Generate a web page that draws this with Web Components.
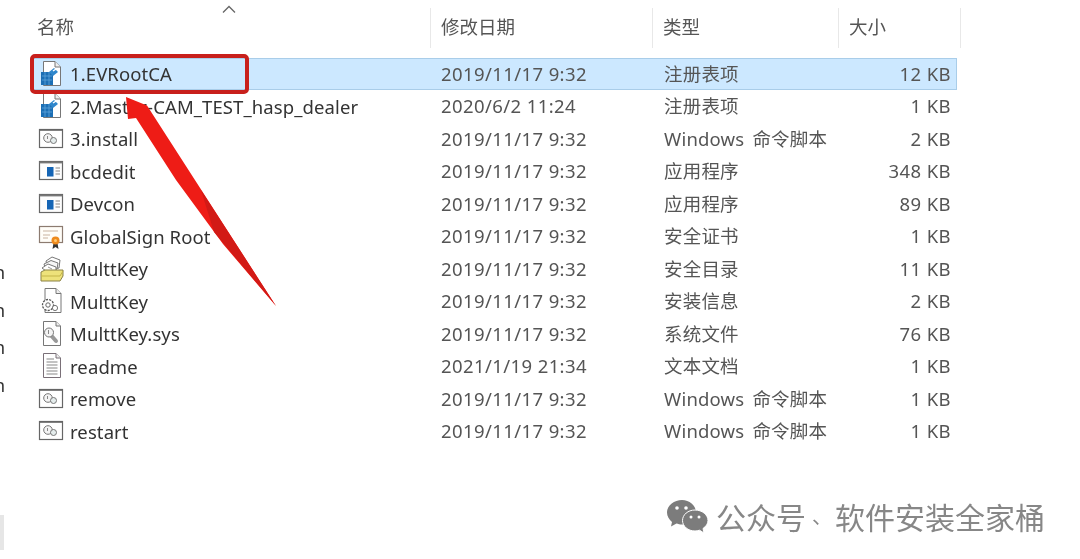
<!DOCTYPE html>
<html>
<head>
<meta charset="utf-8">
<style>
html, body { margin: 0; background: #fff; }
body { width: 1080px; height: 559px; overflow: hidden; font-family: "Noto Sans", "Noto Sans CJK SC", sans-serif; }
</style>
</head>
<body>
<explorer-view>
  <list-header></list-header>
  <file-row icon="reg" date="2019/11/17 9:32" kind="注册表项" size="12 KB" selected>1.EVRootCA</file-row>
  <file-row icon="reg" date="2020/6/2 11:24" kind="注册表项" size="1 KB">2.Master-CAM_TEST_hasp_dealer</file-row>
  <file-row icon="script" date="2019/11/17 9:32" kind="Windows 命令脚本" size="2 KB">3.install</file-row>
  <file-row icon="app" date="2019/11/17 9:32" kind="应用程序" size="348 KB">bcdedit</file-row>
  <file-row icon="app" date="2019/11/17 9:32" kind="应用程序" size="89 KB">Devcon</file-row>
  <file-row icon="cert" date="2019/11/17 9:32" kind="安全证书" size="1 KB">GlobalSign Root</file-row>
  <file-row icon="cat" date="2019/11/17 9:32" kind="安全目录" size="11 KB">MulttKey</file-row>
  <file-row icon="inf" date="2019/11/17 9:32" kind="安装信息" size="2 KB">MulttKey</file-row>
  <file-row icon="sys" date="2019/11/17 9:32" kind="系统文件" size="76 KB">MulttKey.sys</file-row>
  <file-row icon="txt" date="2021/1/19 21:34" kind="文本文档" size="1 KB">readme</file-row>
  <file-row icon="script" date="2019/11/17 9:32" kind="Windows 命令脚本" size="1 KB">remove</file-row>
  <file-row icon="script" date="2019/11/17 9:32" kind="Windows 命令脚本" size="1 KB">restart</file-row>
  <red-callout></red-callout>
  <edge-scraps></edge-scraps>
  <wechat-mark></wechat-mark>
</explorer-view>

<script>
const icons = {
  reg: `<path d="M5.5 .5H17L22.5 6V24.5H5.5z" fill="#fff" stroke="#777"/><path d="M17 .5V6H22.5" fill="#eee" stroke="#777"/>
    <rect x="3" y="11" width="12" height="13" fill="#1c6fb5"/><path d="M4 15H14M4 19H14M7 11V24M11 11V24" stroke="#5fa5dc" stroke-width=".8"/>
    <path d="M11 11L16 7L20 11L15 15z" fill="#2f87cc"/><path d="M15 10L18 8" stroke="#fff" stroke-width="1.5"/>`,
  script: `<rect x="1.5" y="3.5" width="23" height="18" fill="#fff" stroke="#666" stroke-width="1.2"/><path d="M1.5 4H24.5" stroke="#666" stroke-width="1.6"/>
    <circle cx="10" cy="12" r="4.3" fill="#f4f4f4" stroke="#777"/><circle cx="15.5" cy="14.5" r="3" fill="#e4ecec" stroke="#777"/><path d="M9.5 10V13" stroke="#888"/>`,
  app: `<rect x="1.5" y="3.5" width="23" height="18" fill="#fdfdfd" stroke="#666" stroke-width="1.2"/><path d="M1.5 4.5H24.5" stroke="#777" stroke-width="1.8"/>
    <rect x="9" y="9" width="6.5" height="9.5" fill="#1565b5"/><path d="M17.5 10H22M17.5 13H22M17.5 16H22" stroke="#888" stroke-width="1.1"/>`,
  cert: `<rect x="1.5" y="3.5" width="23" height="16" fill="#fffdf8" stroke="#8c7b70" stroke-width="1.2"/><path d="M5 8H20M5 12H12M5 15H10" stroke="#c9b3a0"/>
    <path d="M15.5 20L14.5 26L17.5 24L20.5 26L19.5 20z" fill="#333"/><circle cx="17.5" cy="17.5" r="4" fill="#ee8a1e"/><circle cx="17.5" cy="17.5" r="1.5" fill="#ffc96e"/>`,
  cat: `<path d="M8 5L14 1L22 4L21 12L10 14z" fill="#fff" stroke="#777"/><path d="M6 8L13 4.5L20 7L19 13L8 15z" fill="#f6f6f6" stroke="#777"/>
    <path d="M4 12L10 8L18 11V15H8z" fill="#fff" stroke="#777"/><path d="M10 11L14 13" stroke="#999"/>
    <path d="M3 16L7 14H25V20L22 25H3z" fill="#eee27a" stroke="#8a8146"/><path d="M3.5 20H22L25 15" fill="none" stroke="#c4b548"/>`,
  inf: `<path d="M7 .5H18L23 5.5V24.5H7z" fill="#fff" stroke="#777"/><path d="M18 .5V5.5H23" fill="#eee" stroke="#777"/>
    <circle cx="10" cy="17" r="5.5" fill="#fff" stroke="#555" stroke-width="1.3" stroke-dasharray="2.2 1.1"/><circle cx="10" cy="17" r="2.2" fill="#fff" stroke="#666"/>
    <circle cx="17" cy="20" r="2.6" fill="#fff" stroke="#777"/>`,
  sys: `<path d="M5.5 .5H18L22.5 5V24.5H5.5z" fill="#fff" stroke="#777"/><path d="M18 .5V5H22.5" fill="#eee" stroke="#777"/>
    <path d="M11 12L18 20" stroke="#999" stroke-width="4" stroke-linecap="round"/><circle cx="11" cy="11.5" r="4.5" fill="#f4f4f4" stroke="#777"/><path d="M10.5 9V13" stroke="#888"/>`,
  txt: `<path d="M5.5 .5H18L22.5 5V24.5H5.5z" fill="#fff" stroke="#7a7078"/><path d="M18 .5V5H22.5" fill="#eee" stroke="#7a7078"/>
    <path d="M8.5 6H16M8.5 9H19.5M8.5 12H19.5M8.5 15H19.5M8.5 18H19.5M8.5 21H19.5" stroke="#888" stroke-width="1.1"/>`
};

class FileIcon extends HTMLElement {
  static get observedAttributes() { return ['name']; }
  constructor() {
    super();
    this.attachShadow({ mode: 'open' });
  }
  attributeChangedCallback(attr, old, value) {
    this.shadowRoot.innerHTML = `
      <style>:host { display:block; width:26px; height:26px; } svg { display:block; }</style>
      <svg width="26" height="26" viewBox="0 0 26 26">${icons[value]}</svg>`;
  }
}
customElements.define('file-icon', FileIcon);

const rowTemplate = document.createElement('template');
rowTemplate.innerHTML = `
<style>
:host {
  display: grid;
  grid-template-columns: 403px 223px 1fr auto;
  align-items: center;
  box-sizing: border-box;
  height: 32.5px;
  width: 925px;
  margin-left: 32px;
  padding: 0 6px;
  font-size: 18.5px;
  color: #333;
}
:host([selected]) {
  background: #cce8ff;
  box-shadow: inset 0 0 0 1px #a9cde9;
}
.name { display: flex; align-items: center; gap: 6px; letter-spacing: .1px; }
.cell { color: #555; letter-spacing: .4px; padding-bottom: 1px; }
.kind { letter-spacing: .2px; word-spacing: 3px; padding-bottom: 2px; }
</style>
<div class="name"><file-icon></file-icon><span><slot></slot></span></div>
<div class="cell date"></div>
<div class="cell kind"></div>
<div class="cell size"></div>
`;

class FileRow extends HTMLElement {
  connectedCallback() {
    this.attachShadow({ mode: 'open' });
    this.shadowRoot.appendChild(rowTemplate.content.cloneNode(true));
    this.shadowRoot.querySelector('file-icon').setAttribute('name', this.getAttribute('icon'));
    this.shadowRoot.querySelector('.date').textContent = this.getAttribute('date');
    this.shadowRoot.querySelector('.kind').textContent = this.getAttribute('kind');
    this.shadowRoot.querySelector('.size').textContent = this.getAttribute('size');
  }
}
customElements.define('file-row', FileRow);

class ListHeader extends HTMLElement {
  connectedCallback() {
    this.attachShadow({ mode: 'open' });
    this.shadowRoot.innerHTML = `
      <style>
      :host {
        display: flex;
        box-sizing: border-box;
        height: 57.5px;
        padding: 8px 0 9px 28px;
        font-size: 18.5px;
        color: #555;
      }
      .col { box-sizing: border-box; height: 40px; line-height: 38px; padding-left: 10px; border-right: 1px solid #e8e8e8; position: relative; }
      .name { width: 403px; padding-left: 9px; }
      .date { width: 222px; }
      .kind { width: 186px; }
      .size { width: 122px; }
      svg { position: absolute; left: 194px; top: -3px; }
      </style>
      <div class="col name">名称
        <svg width="14" height="9" viewBox="0 0 14 9"><path d="M1 7.5L7 1.5L13 7.5" fill="none" stroke="#666" stroke-width="1.3"/></svg>
      </div>
      <div class="col date">修改日期</div>
      <div class="col kind">类型</div>
      <div class="col size">大小</div>`;
  }
}
customElements.define('list-header', ListHeader);

class RedCallout extends HTMLElement {
  connectedCallback() {
    this.attachShadow({ mode: 'open' });
    this.shadowRoot.innerHTML = `
      <style>
      :host { position: absolute; left: 0; top: 0; width: 300px; height: 320px; pointer-events: none; }
      .box { position: absolute; left: 30px; top: 54px; width: 219px; height: 40px; box-sizing: border-box; border: 4px solid #c8201c; border-radius: 5px; }
      svg { position: absolute; left: 0; top: 0; }
      </style>
      <svg width="300" height="320" viewBox="0 0 300 320">
        <path d="M126 97L147 105.5L276 306L223 244L176 180L136 118L128 119z" fill="#ee1c16"/>
        <path d="M201 190L276 306L214 232z" fill="#d21a16"/>
      </svg>
      <div class="box"></div>`;
  }
}
customElements.define('red-callout', RedCallout);

class EdgeScraps extends HTMLElement {
  connectedCallback() {
    this.attachShadow({ mode: 'open' });
    this.shadowRoot.innerHTML = `
      <style>
      :host { position: absolute; left: 0; top: 254px; width: 5px; height: 300px; overflow: hidden; font-size: 18px; line-height: 37.5px; color: #333; }
      span { display: block; margin-left: -6px; }
      .block { position: absolute; left: 0; top: 261px; width: 4px; height: 35px; background: #e6e6e6; }
      </style>
      <span>n</span><span>n</span><span>n</span><span>n</span>
      <div class="block"></div>`;
  }
}
customElements.define('edge-scraps', EdgeScraps);

class WechatMark extends HTMLElement {
  connectedCallback() {
    this.attachShadow({ mode: 'open' });
    this.shadowRoot.innerHTML = `
      <style>
      :host {
        position: absolute; left: 667px; top: 498px;
        display: flex; align-items: center; gap: 8px;
        font-family: "Noto Sans CJK SC", sans-serif;
        font-size: 30px; line-height: 36px; font-weight: 400; color: #878787; white-space: nowrap;
      }
      svg { display: block; }
      .sep { font-size: 20px; line-height: 1; vertical-align: 5px; margin: 0 3px 0 6px; }
      </style>
      <svg width="41" height="35" viewBox="0 0 41 35">
        <path d="M15 1C7 1 0 6.5 0 13.5C0 17.5 2.2 20.5 5 23L4 27.5L9.5 24.5C11 25 13 25.5 15 25.5C22.5 25.5 29 20 29 13.5C29 6.5 22.5 1 15 1z" fill="#7c7c7c"/>
        <path d="M28 11C21 11 15.5 15.7 15.5 21.5C15.5 27.3 21 32 28 32C29.5 32 31 31.7 32.5 31.2L37 34L36 29.5C39 27.5 41 24.7 41 21.5C41 15.7 35 11 28 11z" fill="#7c7c7c" stroke="#fff" stroke-width="1"/>
        <circle cx="10" cy="9" r="1.8" fill="#fff"/><circle cx="19" cy="9" r="1.8" fill="#fff"/>
        <circle cx="24" cy="18" r="1.5" fill="#fff"/><circle cx="32" cy="18" r="1.5" fill="#fff"/>
      </svg>
      <div><span>公众号</span><span class="sep">、</span><span>软件安装全家桶</span></div>`;
  }
}
customElements.define('wechat-mark', WechatMark);

class ExplorerView extends HTMLElement {
  constructor() {
    super();
    this.attachShadow({ mode: 'open' });
    this.shadowRoot.innerHTML = `
      <style>
      :host { display: block; position: relative; width: 1080px; height: 559px; filter: blur(.45px); }
      </style>
      <slot></slot>`;
  }
}
customElements.define('explorer-view', ExplorerView);
</script>
</body>
</html>
